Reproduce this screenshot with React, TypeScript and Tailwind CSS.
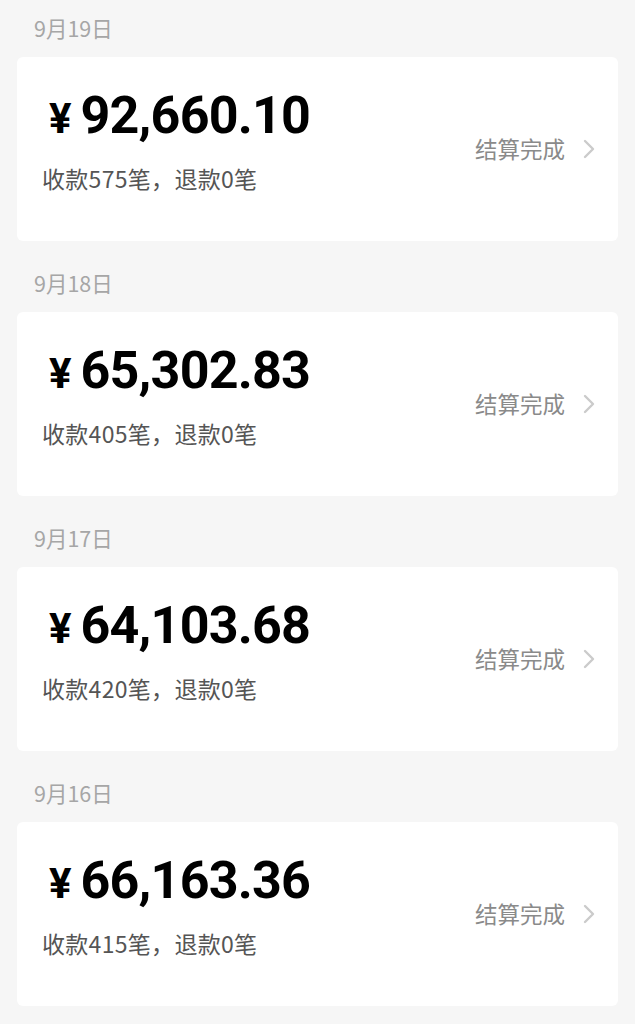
import React from 'react'

const days = [
  { date: '9月19日', amount: '92,660.10', count: 575, refund: 0 },
  { date: '9月18日', amount: '65,302.83', count: 405, refund: 0 },
  { date: '9月17日', amount: '64,103.68', count: 420, refund: 0 },
  { date: '9月16日', amount: '66,163.36', count: 415, refund: 0 },
]

const cjk = { fontFamily: '"Noto Sans CJK SC", "Noto Sans", sans-serif' }

const Chevron = () => (
  <svg width="14" height="22" viewBox="0 0 14 22" fill="none">
    <path d="M3 3l8 8-8 8" stroke="#cbcbcb" strokeWidth="2.4" strokeLinecap="round" strokeLinejoin="round" />
  </svg>
)

const DayCard = ({ date, amount, count, refund }: (typeof days)[number]) => {
  return (
    <div className="flex flex-col [&+&]:mt-[14px]">
      <div className="h-[57px] flex items-center pl-[17px] text-[21.5px] text-[#a6a6a6]" style={cjk}>
        {date}
      </div>
      <div className="h-[184px] bg-white rounded-[6px] flex items-center justify-between pl-[25px] pr-[22px]">
        <div className="flex flex-col pb-[18px]">
          <div className="flex items-baseline leading-none text-black" style={{ fontFamily: 'Roboto, sans-serif' }}>
            <span className="ml-[7px] mr-[9px] text-[42px] font-bold">¥</span>
            <span className="text-[52px] font-bold tracking-[-0.8px]">{amount}</span>
          </div>
          <div className="mt-[25px] text-[23px] tracking-[0.3px] leading-none text-[#555555]" style={cjk}>
            收款{count}笔，退款{refund}笔
          </div>
        </div>
        <div className="flex items-center gap-[17px]">
          <span className="text-[22.5px] text-[#8a8a8a]" style={cjk}>结算完成</span>
          <Chevron />
        </div>
      </div>
    </div>
  )
}

export default function App() {
  return (
    <div className="min-h-[1024px] bg-[#f6f6f6] px-[17px] flex flex-col">
      {days.map((d) => (
        <DayCard key={d.date} {...d} />
      ))}
    </div>
  )
}
